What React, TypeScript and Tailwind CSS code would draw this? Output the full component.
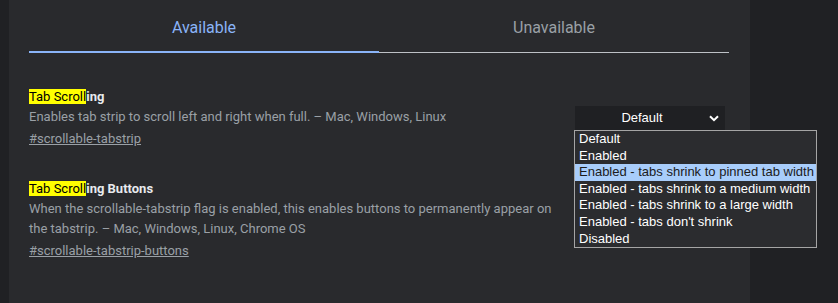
import React from "react";

const roboto = { fontFamily: "Roboto, 'Noto Sans', Arial, sans-serif" };

function Chevron() {
  return (
    <svg width="10" height="7" viewBox="0 0 10 7" className="block">
      <path d="M1 1.2 L5 5.2 L9 1.2" fill="none" stroke="#ffffff" strokeWidth="2" />
    </svg>
  );
}

function Select({ hidden }: { hidden?: boolean }) {
  return (
    <div
      className="w-[150px] h-[25px] bg-[#1f2023] text-white flex items-center relative text-[13px] shrink-0 mr-[5px]"
      style={{ fontFamily: "'Liberation Sans', Arial, sans-serif" }}
    >
      {!hidden && (
        <>
          <span className="flex-1 text-center pr-[16px]">Default</span>
          <span className="absolute right-[6px] top-[9px]">
            <Chevron />
          </span>
        </>
      )}
    </div>
  );
}

function Flag({
  rest,
  desc,
  link,
  className,
  hiddenSelect,
}: {
  rest: string;
  desc: React.ReactNode;
  link: string;
  className?: string;
  hiddenSelect?: boolean;
}) {
  return (
    <div className={"flex items-center justify-between " + (className ?? "")}>
      <div className="w-[528px]">
        <div className="text-[13px] leading-[20px] font-bold text-[#e8eaed]">
          <mark className="bg-[#ffff00] text-black font-normal">Tab Scroll</mark>
          {rest}
        </div>
        <div className="text-[13px] leading-[20px] text-[#9aa0a6]">{desc}</div>
        <div className="text-[13px] leading-[20px] mt-[2px] text-[#9aa0a6] underline">{link}</div>
      </div>
      <Select hidden={hiddenSelect} />
    </div>
  );
}

const options = [
  "Default",
  "Enabled",
  "Enabled - tabs shrink to pinned tab width",
  "Enabled - tabs shrink to a medium width",
  "Enabled - tabs shrink to a large width",
  "Enabled - tabs don't shrink",
  "Disabled",
];

export default function App() {
  return (
    <div className="w-[838px] h-[303px] bg-[#202124] flex relative overflow-hidden" style={roboto}>
      <div className="w-[9px] shrink-0" />
      <div className="w-[741px] shrink-0 bg-[#292a2d] px-[20px]">
        <div className="flex">
          <div className="w-[350px] h-[53px] border-b-2 border-[#8ab4f8] flex justify-center pt-[18px]">
            <span className="text-[16px] leading-[20px] text-[#8ab4f8]">Available</span>
          </div>
          <div className="w-[350px] h-[53px] flex flex-col">
            <div className="flex-1 flex justify-center pt-[18px]">
              <span className="text-[16px] leading-[20px] text-[#9aa0a6]">Unavailable</span>
            </div>
            <div className="h-[1px] bg-[#bdc1c6]" />
          </div>
        </div>
        <Flag
          className="mt-[34px]"
          rest="ing"
          desc="Enables tab strip to scroll left and right when full. – Mac, Windows, Linux"
          link="#scrollable-tabstrip"
        />
        <Flag
          className="mt-[30px]"
          rest="ing Buttons"
          desc="When the scrollable-tabstrip flag is enabled, this enables buttons to permanently appear on the tabstrip. – Mac, Windows, Linux, Chrome OS"
          link="#scrollable-tabstrip-buttons"
          hiddenSelect
        />
      </div>
      <div className="flex-1" />
      <div
        className="absolute left-[574px] top-[130px] w-[243px] border border-[#a5a5a5] bg-[#2b2c2f] text-white text-[13px]"
        style={{ fontFamily: "'Liberation Sans', Arial, sans-serif" }}
      >
        {options.map((o, i) => (
          <div
            key={o}
            className={
              "h-[16.6px] leading-[16.6px] pl-[4px] whitespace-nowrap " +
              (i === 2 ? "bg-[#a8cdfb] text-[#1b1b1b]" : "")
            }
          >
            {o}
          </div>
        ))}
      </div>
    </div>
  );
}
